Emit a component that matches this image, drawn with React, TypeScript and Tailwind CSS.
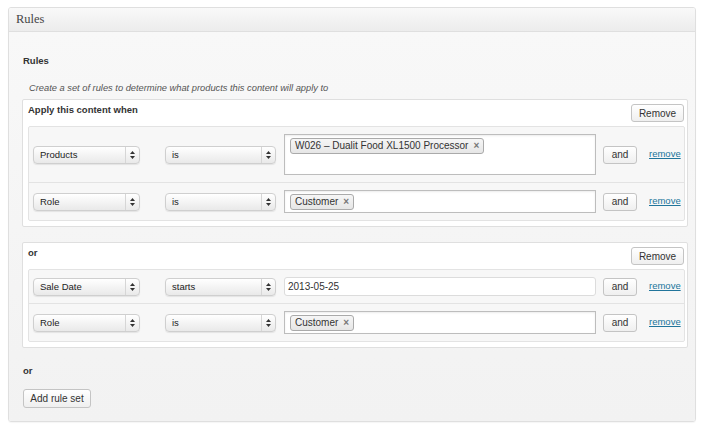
import React from 'react';

const sans = "font-['Liberation_Sans',Arial,sans-serif]";

const SelectArrows = () => (
  <svg width="5" height="8" viewBox="0 0 5 8" className="block">
    <path d="M2.5 0 L5 3 L0 3 Z" fill="#333" />
    <path d="M2.5 8 L5 5 L0 5 Z" fill="#333" />
  </svg>
);

const Select = ({ value, width }: { value: string; width: string }) => (
  <div
    className={`${width} h-[18px] flex items-stretch rounded-[4px] border border-[#cfcfcf] bg-gradient-to-b from-white to-[#e9e9e9] shadow-[0_1px_1px_rgba(0,0,0,0.08)]`}
  >
    <span className="flex-1 pl-[6px] text-[9.5px] leading-[16px] text-[#222]">{value}</span>
    <span className="w-[14px] flex items-center justify-center border-l border-[#d6d6d6]">
      <SelectArrows />
    </span>
  </div>
);

const Token = ({ label }: { label: string }) => (
  <span className="flex items-center h-[16px] px-[4px] gap-[5px] rounded-[3px] border border-[#aaa] bg-gradient-to-b from-[#f6f6f6] to-[#e6e6e6] text-[10px] leading-[14px] text-[#333]">
    {label}
    <span className="text-[10px] font-bold text-[#777]">×</span>
  </span>
);

type Rule = {
  field: string;
  op: string;
  tokens?: string[];
  text?: string;
  h: string;
};

const RuleRow = ({ rule, last }: { rule: Rule; last: boolean }) => (
  <div className={`flex items-center py-[7px] pl-[4px] ${last ? '' : 'border-b border-[#e3e3e3]'}`}>
    <Select value={rule.field} width="w-[107px]" />
    <div className="ml-[25px]">
      <Select value={rule.op} width="w-[111px]" />
    </div>
    <div
      className={`ml-[8px] w-[312px] ${rule.h} border bg-white flex ${
        rule.tokens
          ? 'items-start border-[#bdbdbd] shadow-[inset_0_1px_2px_rgba(0,0,0,0.08)] px-[5px] pt-[3px]'
          : 'items-center border-[#dcdcdc] rounded-[3px] px-[3px]'
      }`}
    >
      {rule.tokens ? (
        rule.tokens.map((t) => <Token key={t} label={t} />)
      ) : (
        <span className="text-[10px] text-[#333]">{rule.text}</span>
      )}
    </div>
    <button className="ml-[7px] w-[34px] h-[18px] rounded-[3px] border border-[#c4c4c4] bg-gradient-to-b from-white to-[#efefef] text-[10px] text-[#333]">
      and
    </button>
    <a className="ml-[12px] text-[9.5px] text-[#21759b] underline">remove</a>
  </div>
);

const RuleSet = ({ title, rules }: { title: string; rules: Rule[] }) => (
  <div className="bg-white border border-[#dfdfdf] rounded-[2px]">
    <div className="h-[26px] flex justify-between items-start pt-[4px] pl-[5px] pr-[3px]">
      <span className="text-[9.5px] font-bold text-[#333] leading-[12px]">{title}</span>
      <button className="w-[53px] h-[18px] rounded-[3px] border border-[#c4c4c4] bg-gradient-to-b from-white to-[#efefef] text-[10px] text-[#333]">
        Remove
      </button>
    </div>
    <div className="ml-[5px] mr-[2px] mb-[5px] bg-[#f7f7f7] border border-[#e3e3e3] rounded-[2px]">
      {rules.map((r, i) => (
        <RuleRow key={i} rule={r} last={i === rules.length - 1} />
      ))}
    </div>
  </div>
);

export default function App() {
  const sets: { title: string; rules: Rule[] }[] = [
    {
      title: 'Apply this content when',
      rules: [
        { field: 'Products', op: 'is', tokens: ['W026 – Dualit Food XL1500 Processor'], h: 'h-[41px]' },
        { field: 'Role', op: 'is', tokens: ['Customer'], h: 'h-[23px]' },
      ],
    },
    {
      title: 'or',
      rules: [
        { field: 'Sale Date', op: 'starts', text: '2013-05-25', h: 'h-[19px]' },
        { field: 'Role', op: 'is', tokens: ['Customer'], h: 'h-[23px]' },
      ],
    },
  ];

  return (
    <div className={`w-[704px] h-[428px] bg-white pt-[7px] px-[8px] ${sans}`}>
      <div className="border border-[#dfdfdf] rounded-[3px] overflow-hidden shadow-[0_1px_1px_rgba(0,0,0,0.04)]">
        <div className="h-[24px] flex items-center pl-[7px] border-b border-[#dfdfdf] bg-gradient-to-b from-[#f9f9f9] to-[#ececec]">
          <span className="font-['Liberation_Serif','Times_New_Roman',serif] text-[12.5px] text-[#464646]">Rules</span>
        </div>
        <div className="bg-gradient-to-b from-[#f8f8f8] to-[#f2f2f2] pl-[13px] pr-[7px] pb-[12px]">
          <div className="pt-[23px] pl-[1px] text-[9.5px] font-bold text-[#333] leading-[12px]">Rules</div>
          <div className="mt-[15px] pl-[7px] text-[9.3px] italic text-[#555] leading-[12px]">
            Create a set of rules to determine what products this content will apply to
          </div>
          <div className="mt-[5px] flex flex-col gap-[15px]">
            {sets.map((s, i) => (
              <RuleSet key={i} title={s.title} rules={s.rules} />
            ))}
          </div>
          <div className="mt-[17px] pl-[1px] text-[9.5px] font-bold text-[#333] leading-[12px]">or</div>
          <button className="mt-[12px] ml-[1px] w-[68px] h-[19px] rounded-[3px] border border-[#c4c4c4] bg-gradient-to-b from-white to-[#efefef] text-[10px] text-[#333]">
            Add rule set
          </button>
        </div>
      </div>
    </div>
  );
}
